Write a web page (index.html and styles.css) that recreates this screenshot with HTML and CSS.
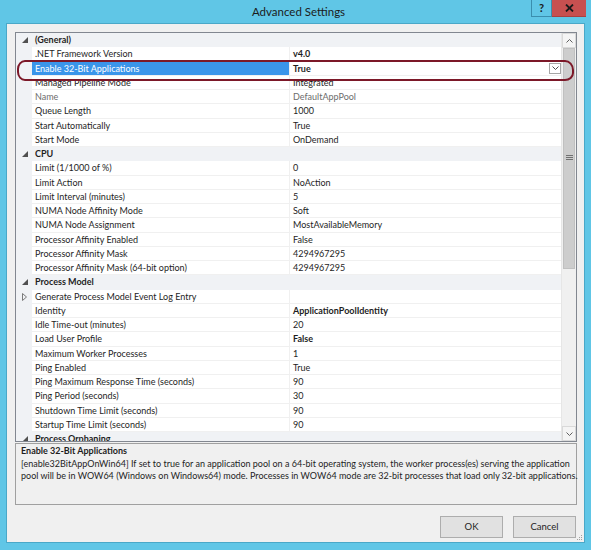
FILE: index.html
```html
<!DOCTYPE html>
<html>
<head>
<meta charset="utf-8">
<title>Advanced Settings</title>
<link rel="stylesheet" href="styles.css">
</head>
<body>
<div class="window">
  <div class="titlebar">
    <div class="title">Advanced Settings</div>
    <div class="caption-btns">
      <div class="btn-help">?</div>
      <div class="btn-close"><svg width="9" height="8" viewBox="0 0 9 8"><path d="M1 0.5L8 7.5M8 0.5L1 7.5" stroke="#1a1a1a" stroke-width="1.8"/></svg></div>
    </div>
  </div>
  <div class="client">
    <div class="grid">
      <div class="rows">
        <div class="row cat"><span class="gut"><svg class="tri" width="6" height="6" viewBox="0 0 6 6"><path d="M6 0V6H0Z" fill="#505050"/></svg></span><span class="name">(General)</span></div>
        <div class="row"><span class="gut"></span><span class="name">.NET Framework Version</span><span class="val b">v4.0</span></div>
        <div class="row sel"><span class="gut"></span><span class="name">Enable 32-Bit Applications</span><span class="val b">True<span class="dd"><svg width="7" height="4" viewBox="0 0 7 4"><path d="M0.5 0.5L3.5 3.5L6.5 0.5" fill="none" stroke="#505050" stroke-width="1"/></svg></span></span></div>
        <div class="row"><span class="gut"></span><span class="name">Managed Pipeline Mode</span><span class="val">Integrated</span></div>
        <div class="row dis"><span class="gut"></span><span class="name">Name</span><span class="val">DefaultAppPool</span></div>
        <div class="row"><span class="gut"></span><span class="name">Queue Length</span><span class="val">1000</span></div>
        <div class="row"><span class="gut"></span><span class="name">Start Automatically</span><span class="val">True</span></div>
        <div class="row"><span class="gut"></span><span class="name">Start Mode</span><span class="val">OnDemand</span></div>
        <div class="row cat"><span class="gut"><svg class="tri" width="6" height="6" viewBox="0 0 6 6"><path d="M6 0V6H0Z" fill="#505050"/></svg></span><span class="name">CPU</span></div>
        <div class="row"><span class="gut"></span><span class="name">Limit (1/1000 of %)</span><span class="val">0</span></div>
        <div class="row"><span class="gut"></span><span class="name">Limit Action</span><span class="val">NoAction</span></div>
        <div class="row"><span class="gut"></span><span class="name">Limit Interval (minutes)</span><span class="val">5</span></div>
        <div class="row"><span class="gut"></span><span class="name">NUMA Node Affinity Mode</span><span class="val">Soft</span></div>
        <div class="row"><span class="gut"></span><span class="name">NUMA Node Assignment</span><span class="val">MostAvailableMemory</span></div>
        <div class="row"><span class="gut"></span><span class="name">Processor Affinity Enabled</span><span class="val">False</span></div>
        <div class="row"><span class="gut"></span><span class="name">Processor Affinity Mask</span><span class="val">4294967295</span></div>
        <div class="row"><span class="gut"></span><span class="name">Processor Affinity Mask (64-bit option)</span><span class="val">4294967295</span></div>
        <div class="row cat"><span class="gut"><svg class="tri" width="6" height="6" viewBox="0 0 6 6"><path d="M6 0V6H0Z" fill="#505050"/></svg></span><span class="name">Process Model</span></div>
        <div class="row"><span class="gut"><svg class="tri-c" width="5" height="8" viewBox="0 0 5 8"><path d="M0.5 0.5L4.5 4L0.5 7.5Z" fill="none" stroke="#7a7a7a" stroke-width="1"/></svg></span><span class="name">Generate Process Model Event Log Entry</span><span class="val"></span></div>
        <div class="row"><span class="gut"></span><span class="name">Identity</span><span class="val b">ApplicationPoolIdentity</span></div>
        <div class="row"><span class="gut"></span><span class="name">Idle Time-out (minutes)</span><span class="val">20</span></div>
        <div class="row"><span class="gut"></span><span class="name">Load User Profile</span><span class="val b">False</span></div>
        <div class="row"><span class="gut"></span><span class="name">Maximum Worker Processes</span><span class="val">1</span></div>
        <div class="row"><span class="gut"></span><span class="name">Ping Enabled</span><span class="val">True</span></div>
        <div class="row"><span class="gut"></span><span class="name">Ping Maximum Response Time (seconds)</span><span class="val">90</span></div>
        <div class="row"><span class="gut"></span><span class="name">Ping Period (seconds)</span><span class="val">30</span></div>
        <div class="row"><span class="gut"></span><span class="name">Shutdown Time Limit (seconds)</span><span class="val">90</span></div>
        <div class="row"><span class="gut"></span><span class="name">Startup Time Limit (seconds)</span><span class="val">90</span></div>
        <div class="row cat"><span class="gut"><svg class="tri" width="6" height="6" viewBox="0 0 6 6"><path d="M6 0V6H0Z" fill="#505050"/></svg></span><span class="name">Process Orphaning</span></div>
      </div>
      <div class="scrollbar">
        <div class="sb-btn"><svg width="7" height="4" viewBox="0 0 7 4"><path d="M0.5 3.5L3.5 0.5L6.5 3.5" fill="none" stroke="#606060"/></svg></div>
        <div class="sb-track">
          <div class="sb-thumb"><svg width="7" height="5" viewBox="0 0 7 5"><path d="M0 0.5H7M0 2.5H7M0 4.5H7" stroke="#707070"/></svg></div>
        </div>
        <div class="sb-btn"><svg width="7" height="4" viewBox="0 0 7 4"><path d="M0.5 0.5L3.5 3.5L6.5 0.5" fill="none" stroke="#606060"/></svg></div>
      </div>
      <div class="annot"></div>
    </div>
    <div class="desc">
      <div class="desc-title">Enable 32-Bit Applications</div>
      <div class="desc-line">[enable32BitAppOnWin64] If set to true for an application pool on a 64-bit operating system, the worker process(es) serving the application</div>
      <div class="desc-line">pool will be in WOW64 (Windows on Windows64) mode. Processes in WOW64 mode are 32-bit processes that load only 32-bit applications.</div>
    </div>
    <div class="buttons">
      <div class="button">OK</div>
      <div class="button">Cancel</div>
    </div>
    <svg class="grip" width="6" height="6" viewBox="0 0 6 6"><rect x="4" y="0" width="1" height="1" fill="#a0a0a0"/><rect x="2" y="2" width="1" height="1" fill="#a0a0a0"/><rect x="4" y="2" width="1" height="1" fill="#a0a0a0"/><rect x="0" y="4" width="1" height="1" fill="#a0a0a0"/><rect x="2" y="4" width="1" height="1" fill="#a0a0a0"/><rect x="4" y="4" width="1" height="1" fill="#a0a0a0"/></svg>
  </div>
</div>
</body>
</html>
```

FILE: styles.css
```css
* { box-sizing: border-box; }
html, body { margin: 0; padding: 0; }
body {
  width: 591px;
  height: 550px;
  overflow: hidden;
  font-family: "Segoe UI", "Lato", "Noto Sans", sans-serif;
  font-size: 9px;
  color: #1e1e1e;
}
.window {
  width: 591px;
  height: 550px;
  background: #60c6e6;
  display: flex;
  flex-direction: column;
  padding: 0 6px 7px 6px;
}
.titlebar {
  height: 23px;
  position: relative;
  flex: none;
}
.title {
  text-align: center;
  font-family: "Segoe UI", "Lato", "Noto Sans", sans-serif;
  font-size: 11.5px;
  line-height: 24px;
  color: #1b1b1b;
  padding-left: 6px;
}
.caption-btns {
  position: absolute;
  top: 0;
  right: -1px;
  display: flex;
}
.btn-help {
  width: 21px;
  height: 17px;
  border: 1px solid #3a8eae;
  border-top: none;
  background: #60c6e6;
  text-align: center;
  font-weight: bold;
  font-size: 11px;
  line-height: 16px;
  color: #1a1a1a;
}
.btn-close {
  width: 34px;
  height: 17px;
  background: #c75050;
  border-bottom: 1px solid #a84040;
  display: flex;
  align-items: center;
  justify-content: center;
}
.client {
  flex: 1;
  background: #f0f0f0;
  border: 1px solid #4aa8c8;
  padding: 8px 7px 0 8px;
  display: flex;
  flex-direction: column;
  position: relative;
}
.grid {
  height: 410px;
  border: 1px solid #828790;
  background: #ffffff;
  display: flex;
  position: relative;
  flex: none;
}
.rows {
  flex: 1;
  overflow: hidden;
  display: flex;
  flex-direction: column;
}
.row {
  height: 14.25px;
  flex: none;
  display: flex;
  line-height: 14px;
  white-space: nowrap;
}
.gut {
  width: 16px;
  flex: none;
  background: #f0f2f5;
  display: flex;
  align-items: center;
  justify-content: flex-start;
  padding-left: 6px;
}
.name {
  width: 257px;
  flex: none;
  padding-left: 3px;
  border-bottom: 1px solid #f0f0f0;
  overflow: hidden;
}
.val {
  flex: 1;
  padding-left: 3px;
  border-left: 1px solid #f0f0f0;
  border-bottom: 1px solid #f0f0f0;
  display: flex;
  align-items: flex-start;
  overflow: hidden;
}
.b { font-weight: bold; }
.cat { background: #f0f2f5; }
.cat .name {
  font-weight: bold;
  border-bottom: 1px solid #f0f2f5;
  width: auto;
  flex: 1;
}
.dis .name, .dis .val { color: #6d6d6d; }
.sel .name {
  background: #3a95ea;
  color: #ffffff;
}
.dd {
  margin-left: auto;
  margin-top: 1px;
  width: 12px;
  height: 11px;
  border: 1px solid #a6a6a6;
  background: #ffffff;
  display: flex;
  align-items: center;
  justify-content: center;
}
.tri { display: block; }
.tri-c { display: block; }
.scrollbar {
  width: 15px;
  flex: none;
  display: flex;
  flex-direction: column;
  background: #f0f0f0;
  border-left: 1px solid #e6e6e6;
}
.sb-btn {
  height: 15px;
  flex: none;
  display: flex;
  align-items: center;
  justify-content: center;
  background: #f4f4f4;
  border: 1px solid #d9d9d9;
}
.sb-track {
  flex: 1;
}
.sb-thumb {
  height: 221px;
  background: #cdcdcd;
  border: 1px solid #c0c0c0;
  margin: 0 1px;
  display: flex;
  align-items: center;
  justify-content: center;
  padding-bottom: 2px;
}
.annot {
  position: absolute;
  left: 1px;
  top: 27px;
  width: 557px;
  height: 21px;
  border: 2px solid #7c1828;
  border-radius: 8px 9px 9px 8px / 9px 10px 8px 9px;
  pointer-events: none;
}
.desc {
  margin-top: 1px;
  height: 62px;
  border: 1px solid #a0a0a0;
  background: #f0f0f0;
  padding: 0 5px;
  flex: none;
}
.desc-title {
  font-weight: bold;
  line-height: 14px;
}
.desc-line {
  line-height: 12px;
  white-space: nowrap;
}
.buttons {
  display: flex;
  justify-content: flex-end;
  gap: 10px;
  margin-top: 11px;
  padding-right: 1px;
}
.button {
  width: 63px;
  height: 22px;
  border: 1px solid #adadad;
  background: #e1e1e1;
  text-align: center;
  line-height: 20px;
  font-size: 9.5px;
}
.grip {
  position: absolute;
  right: 1px;
  bottom: 1px;
}
```
